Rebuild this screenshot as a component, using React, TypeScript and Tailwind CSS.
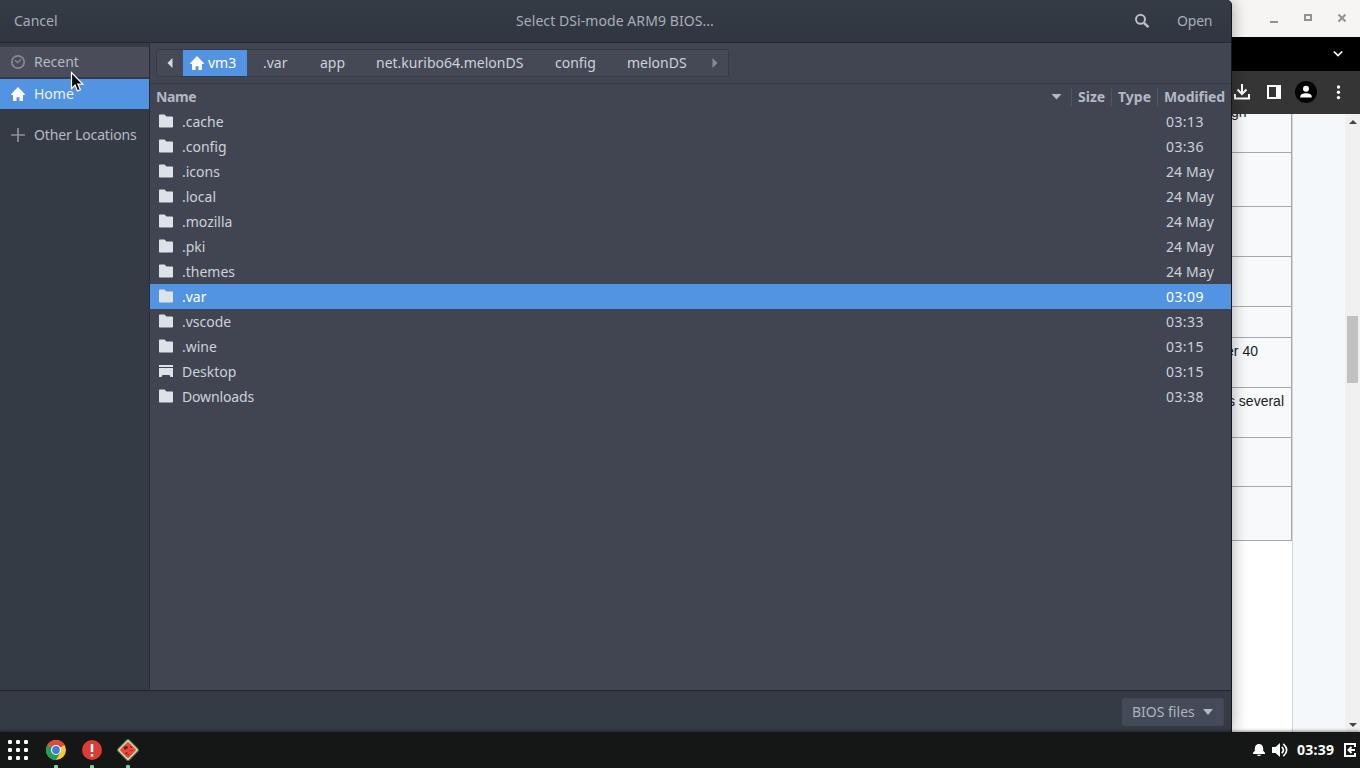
import React from 'react';

const Folder = () => (
  <svg width="16" height="16" viewBox="0 0 16 16" fill="#dde1e8" className="-mt-[2px]">
    <path d="M1.800 1.500h4.700l2 2h5.700q.8 0 .8.800V13.700q0 .8-.8.800H1.800q-.8 0-.8-.8V2.300q0-.8.800-.8z" />
  </svg>
);
const DesktopIcon = () => (
  <svg width="16" height="16" viewBox="0 0 16 16" fill="#dde1e8" className="-mt-[1px]">
    <path d="M1 2h14v2H1zM1 5h14v9h-2.500l-1-2h-7l-1 2H1z" />
  </svg>
);
const HomeIcon = () => (
  <svg width="16" height="16" viewBox="0 0 16 16" fill="#fff">
    <path d="M8 1 1.200 8q-.5 1.100.6 1.100H3v5.100q0 .8.800.800h2.700v-3.800h3V15h2.700q.8 0 .8-.8V9.100h1.200q1.100 0 .6-1.100z" />
  </svg>
);

const files: [string, string][] = [
  ['.cache', '03:13'],
  ['.config', '03:36'],
  ['.icons', '24 May'],
  ['.local', '24 May'],
  ['.mozilla', '24 May'],
  ['.pki', '24 May'],
  ['.themes', '24 May'],
  ['.var', '03:09'],
  ['.vscode', '03:33'],
  ['.wine', '03:15'],
  ['Desktop', '03:15'],
  ['Downloads', '03:38'],
];

function Header() {
  return (
    <header className="flex h-[43px] shrink-0 items-center border-b border-[#242830] bg-linear-to-b from-[#363c46] to-[#303640] pb-[1px] text-[#a8aeb9]">
      <div className="w-[516px] pl-[14px]">Cancel</div>
      <div className="w-[618px] whitespace-nowrap tracking-[0.07px]">Select DSi-mode ARM9 BIOS...</div>
      <svg width="16" height="16" viewBox="0 0 16 16" fill="none" stroke="#b9bec8" strokeWidth="2">
        <circle cx="6.5" cy="6.3" r="4.5" />
        <path d="m10 10 4.5 4.2" strokeWidth="2.4" />
      </svg>
      <div className="pl-[27px] tracking-[-0.2px]">Open</div>
    </header>
  );
}

function Sidebar() {
  return (
    <aside className="flex w-[150px] shrink-0 flex-col border-r border-[#282c35] bg-[#353b45] pt-[4px] text-[#b4b9c4]">
      <div className="flex h-[30px] items-center gap-2 bg-[#4a4d59] pl-[10px]">
        <svg width="16" height="16" viewBox="0 0 16 16" fill="none" stroke="#858995" strokeWidth="1.7">
          <circle cx="8" cy="8" r="6.2" />
          <path d="m4.8 6.2 3 2.3 3.2-3" strokeWidth="1.4" />
        </svg>
        Recent
      </div>
      <div className="mt-[2px] flex h-[30px] items-center gap-2 bg-[#5294e2] pl-[10px] text-[#edf3fb]">
        <HomeIcon />
        Home
      </div>
      <div className="mt-[11px] flex h-[30px] items-center gap-2 whitespace-nowrap pl-[10px] tracking-[-0.15px]">
        <svg width="16" height="16" viewBox="0 0 16 16" fill="none" stroke="#8b909b" strokeWidth="1.7">
          <path d="M8 1v14M1 8h14" />
        </svg>
        Other Locations
      </div>
    </aside>
  );
}

function PathBar() {
  return (
    <div className="flex h-[41px] shrink-0 border-b border-[#353944] pl-[6px] pt-[6px]">
      <div className="flex h-[28px] w-[573px] items-center whitespace-nowrap rounded-[3px] border border-[#373b46] bg-[#454956] text-[#ccd1dc]">
        <div className="flex w-[26px] justify-center">
          <svg width="6" height="10" viewBox="0 0 6 10" fill="#d3dae3">
            <path d="M5.5 0v10L.5 5z" />
          </svg>
        </div>
        <div className="flex h-[26px] w-[64px] items-center gap-[3px] bg-[#5294e2] pl-[6px] text-white">
          <HomeIcon />
          vm3
        </div>
        <div className="w-[57px] pl-[16px]">.var</div>
        <div className="w-[56px] pl-[16px]">app</div>
        <div className="w-[179px] pl-[16px]">net.kuribo64.melonDS</div>
        <div className="w-[72px] pl-[16px]">config</div>
        <div className="w-[101px] pl-[16px]">melonDS</div>
        <svg width="6" height="10" viewBox="0 0 6 10" fill="#858b98">
          <path d="M.5 0v10l5-5z" />
        </svg>
      </div>
    </div>
  );
}

function FileList() {
  return (
    <section className="flex min-w-0 flex-1 flex-col bg-[#414551]">
      <PathBar />
      <div className="flex h-[25px] shrink-0 items-center font-bold text-[#b3b8c3]">
        <div className="flex h-[18px] w-[922px] items-center justify-between border-r border-[#505562] pl-[6px] pr-[9px]">
          <span className="tracking-[-0.35px]">Name</span>
          <svg width="11" height="6" viewBox="0 0 11 6" fill="#b3b8c3">
            <path d="M.5 0h10l-5 5.5z" />
          </svg>
        </div>
        <div className="flex h-[18px] w-[40px] items-center border-r border-[#505562] pl-[6px]">Size</div>
        <div className="flex h-[18px] w-[46px] items-center border-r border-[#505562] pl-[6px]">Type</div>
        <div className="pl-[6px] tracking-[-0.1px]">Modified</div>
      </div>
      {files.map(([name, date]) => (
        <div
          key={name}
          className={
            name === '.var'
              ? 'flex h-[25px] items-center bg-[#5294e2] pl-2 text-white'
              : 'flex h-[25px] items-center pl-2 text-[#ccd1dc]'
          }
        >
          {name === 'Desktop' ? <DesktopIcon /> : <Folder />}
          <span className={name === 'Downloads' ? 'w-[992px] pl-2 tracking-[-0.15px]' : 'w-[992px] pl-2'}>{name}</span>
          <span className={date === '24 May' ? 'tracking-[0.1px]' : 'tracking-[0.4px]'}>{date}</span>
        </div>
      ))}
    </section>
  );
}

function Dialog() {
  return (
    <main className="z-10 flex h-[732px] w-[1232px] shrink-0 flex-col overflow-hidden rounded-tr-[5px] border-r border-[#15171c] bg-[#353b45] shadow-[0_0_16px_rgba(0,0,0,0.35)]">
      <Header />
      <div className="flex min-h-0 flex-1">
        <Sidebar />
        <FileList />
      </div>
      <footer className="flex h-[42px] shrink-0 items-center justify-end border-t border-[#20242b] bg-[#353b45] pr-[7px]">
        <div className="flex h-[28px] w-[102px] items-center justify-between rounded-[2px] border border-[#414753] bg-[#444a58] pl-[9px] pr-[10px] text-[#adb4c1]">
          BIOS files
          <svg width="10" height="6" viewBox="0 0 10 6" fill="#b3bac6">
            <path d="M0 0h10L5 6z" />
          </svg>
        </div>
      </footer>
    </main>
  );
}

const cell = 'border-b border-[#a2a9b1] shrink-0 whitespace-nowrap text-[14px] leading-[22px] text-[#202122]';

function Browser() {
  return (
    <div className="flex h-[732px] w-[128px] flex-col bg-white">
      <div className="flex h-[37px] shrink-0 items-center bg-[#f6f5f4] pl-[37px]">
        <svg width="80" height="12" viewBox="0 0 80 12" fill="none" stroke="#929292" strokeWidth="2">
          <path d="M1 9h8" />
          <path d="M36 2h6v5h-6z" />
          <path d="m69.500 1.500 7 7m0-7-7 7" />
        </svg>
      </div>
      <div className="flex h-[34px] shrink-0 items-center justify-end bg-black pr-[17px]">
        <svg width="10" height="8" viewBox="0 0 10 8" fill="none" stroke="#fff" strokeWidth="1.7">
          <path d="m.8 1.5 4.2 4 4.2-4" />
        </svg>
      </div>
      <div className="flex h-[43px] shrink-0 items-center bg-[#353535] pb-[2px]">
        <svg width="128" height="24" viewBox="0 0 128 24" fill="none" stroke="#fff" strokeWidth="2">
          <path d="M10 4v10M5.5 9.5 10 14l4.500-4.500M3 14v4.500h14V14" />
          <path d="M36 6h12v12H36z" />
          <path d="M44 5h5v14h-5z" fill="#fff" stroke="none" />
          <circle cx="74" cy="12" r="11" fill="#000" stroke="none" />
          <path d="M68.300 17.500v-1c0-4.200 11.400-4.200 11.400 0v1z" fill="#fff" stroke="none" />
          <circle cx="74" cy="8.700" r="3" fill="#fff" stroke="none" />
          <g fill="#fff" stroke="none">
            <circle cx="106.500" cy="7" r="1.700" />
            <circle cx="106.500" cy="12.300" r="1.700" />
            <circle cx="106.500" cy="17.600" r="1.700" />
          </g>
        </svg>
      </div>
      <div className="flex min-h-0 flex-1 font-['Liberation_Sans',sans-serif]">
        <div className="flex w-[61px] shrink-0 flex-col overflow-hidden border-r border-[#d3d7dc]">
          <div className="flex w-[60px] flex-col overflow-hidden border-r border-[#a2a9b1] bg-[#f8f9fa]">
            <div className={`${cell} flex h-[39px] overflow-hidden`}>
              <span className="-mt-[13px] -ml-[1px]">gn</span>
            </div>
            <div className={`${cell} h-[54px]`} />
            <div className={`${cell} h-[50px]`} />
            <div className={`${cell} h-[50px]`} />
            <div className={`${cell} h-[31px]`} />
            <div className={`${cell} flex h-[50px] justify-end pr-[33px] pt-[2px]`}>over 40</div>
            <div className={`${cell} flex h-[50px] justify-end pr-[7px] pt-[2px]`}>as several</div>
            <div className={`${cell} h-[49px]`} />
            <div className={`${cell} h-[54px]`} />
          </div>
        </div>
        <div className="w-[52px] bg-[#f5f8fb]" />
        <div className="flex w-[15px] flex-col items-center bg-[#f0f0f0] pb-[5px] pt-[6px]">
          <svg width="8" height="4" viewBox="0 0 8 4" fill="#454545">
            <path d="M0 4h8L4 0z" />
          </svg>
          <div className="mt-[192px] h-[67px] w-[11px] bg-[#c1c1c1]" />
          <svg className="mt-auto" width="8" height="4" viewBox="0 0 8 4" fill="#454545">
            <path d="M0 0h8L4 4z" />
          </svg>
        </div>
      </div>
    </div>
  );
}

const taskItem = 'flex h-[36px] w-[36px] flex-col items-center justify-between pt-[7px]';

function Taskbar() {
  return (
    <nav className="z-20 flex h-[36px] items-center bg-[#151616] shadow-[0_-1px_3px_rgba(0,0,0,0.45)]">
      <div className="flex w-[38px] pl-[8px]">
        <svg width="20" height="20" viewBox="0 0 20 20" fill="#fff">
          {[0, 8, 16].map((y) => [0, 8, 16].map((x) => <rect key={`${x}-${y}`} x={x} y={y} width="4" height="4" rx="1.2" />))}
        </svg>
      </div>
      <div className={taskItem}>
        <svg width="22" height="22" viewBox="0 0 22 22">
          <circle cx="11" cy="11" r="10" fill="#fbc934" />
          <path d="M11 11 2.340 6A10 10 0 0 1 19.660 6z" fill="#dd4b3e" />
          <path d="M11 11 2.340 6A10 10 0 0 0 11 21l4.300-7.500z" fill="#259b57" />
          <circle cx="11" cy="11" r="5" fill="#fff" />
          <circle cx="11" cy="11" r="3.900" fill="#3c7de0" />
        </svg>
        <i className="h-[3px] w-[4px] rounded-t-[1px] bg-[#7bcba5]" />
      </div>
      <div className={taskItem}>
        <svg width="22" height="22" viewBox="0 0 22 22">
          <circle cx="11" cy="11" r="10" fill="#da3d35" />
          <path d="M11 5v8M11 15v2.500" stroke="#fff" strokeWidth="2.500" />
        </svg>
        <i className="h-[3px] w-[4px] rounded-t-[1px] bg-[#7bcba5]" />
      </div>
      <div className={taskItem}>
        <svg width="24" height="24" viewBox="0 0 24 24" className="-mt-[1px]">
          <g transform="rotate(45 12 12)">
            <rect x="3.500" y="3.500" width="17" height="17" rx="2.500" fill="#377b3d" />
            <rect x="4.600" y="4.600" width="14.800" height="14.800" rx="1.500" fill="#e5d5ae" />
            <rect x="6" y="6" width="12" height="12" rx="1.500" fill="#e8483f" />
          </g>
          <path d="m7.500 8.800 4-1v3l-3 1z" fill="#54231f" />
          <path d="m9 15 4 2M14 8l2 2M14 12.500v1M16 12v1M11 14v1" stroke="#6d2522" strokeWidth="1" />
        </svg>
        <i className="h-[3px] w-[4px] rounded-t-[1px] bg-[#7bcba5]" />
      </div>
      <div className="ml-auto flex items-center pr-[4px] font-bold text-white">
        <svg width="44" height="18" viewBox="0 0 44 18" fill="#fff">
          <path d="M13 13H1v-1.200l1.800-2V7.500C2.800 4.800 4.500 3 7 3s4.200 1.800 4.200 4.500v2.300l1.800 2zM4.500 13.700h5q-2.500 2.600-5 0z" />
          <path d="M20 6h3.500L28 2v14l-4.500-4H20z" />
          <path d="M29.800 5.800q3.200 3.200 0 6.400M31.300 2.800q6.800 6.200 0 12.400" fill="none" stroke="#fff" strokeWidth="1.700" />
        </svg>
        <span className="w-[46px] whitespace-nowrap pl-[1px] text-[14px] tracking-[0.25px]">03:39</span>
        <svg width="14" height="16" viewBox="0 0 14 16" fill="none" stroke="#fff" strokeWidth="2">
          <path d="M13 5V2H3v12h10v-3M13 8H7M9.500 5l-3 3 3 3" />
        </svg>
      </div>
    </nav>
  );
}

export default function App() {
  return (
    <div className="relative flex h-[768px] w-[1360px] flex-col overflow-hidden font-['Noto_Sans',sans-serif] text-[14px] leading-[20px]">
      <div className="flex h-[732px]">
        <Dialog />
        <Browser />
      </div>
      <Taskbar />
      <svg className="absolute left-[70px] top-[71px] z-30" width="14" height="22" viewBox="0 0 14 22">
        <path d="M1.500 1.500v16l3.600-3.400 2.300 5.800 3-1.200-2.500-5.500h4.900z" fill="#0b0b0d" stroke="#fff" strokeWidth="1.200" />
      </svg>
    </div>
  );
}
